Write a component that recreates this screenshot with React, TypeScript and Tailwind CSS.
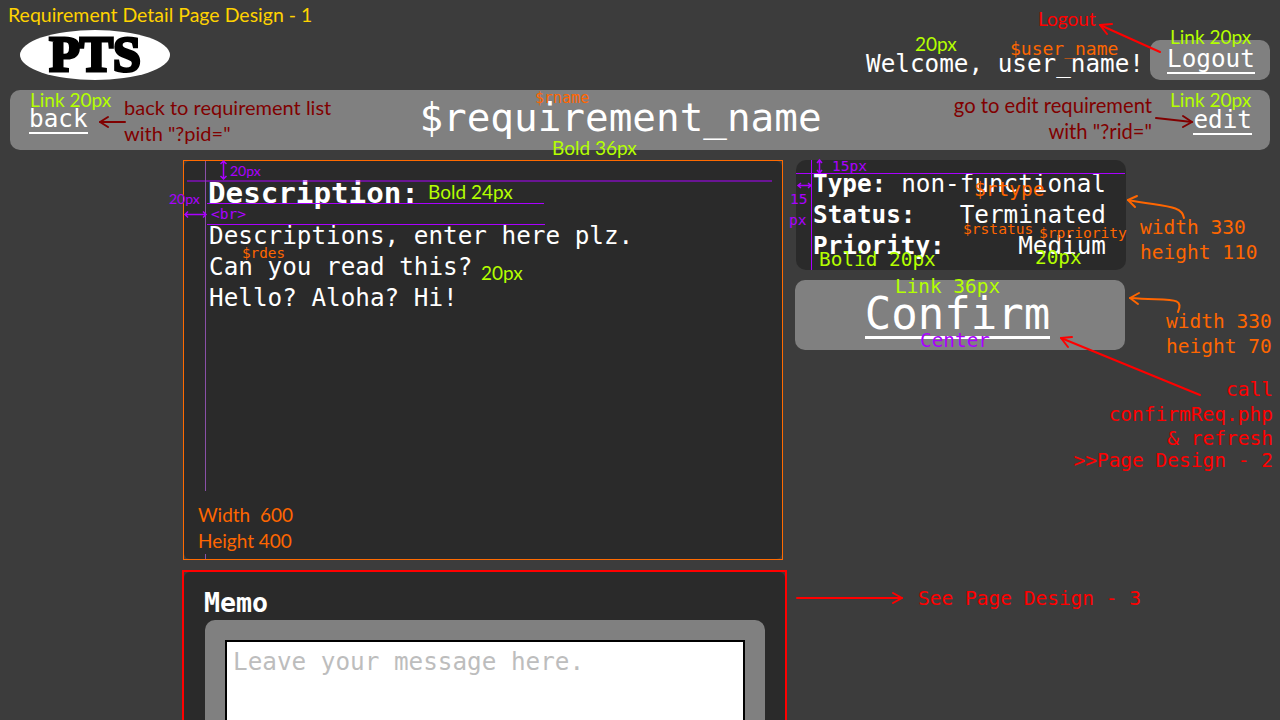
import React from "react";

const mono = "font-['DejaVu_Sans_Mono','Liberation_Mono',monospace]";
const sans = "font-['Lato','Open_Sans',sans-serif]";

function Note({ className, children }: { className: string; children: React.ReactNode }) {
  return <div className={`absolute whitespace-nowrap leading-none ${className}`}>{children}</div>;
}

function Arrow({ d, head, color, width = 2 }: { d: string; head: string; color: string; width?: number }) {
  return (
    <g fill="none" stroke={color} strokeWidth={width} strokeLinecap="round" strokeLinejoin="round">
      <path d={d} />
      <path d={head} />
    </g>
  );
}

function Overlay() {
  const purple = "#aa00ff";
  return (
    <svg className="absolute left-0 top-0 pointer-events-none" width="1280" height="720" viewBox="0 0 1280 720">
      <g stroke={purple} strokeWidth="1" fill="none">
        <path d="M187 181H772" />
        <path d="M207 203.5H544" />
        <path d="M207 224.5H545" />
        <path d="M205.5 161V491M205.5 554V559" stroke="#8a50a8" />
        <path d="M796 173.5H1125" />
        <path d="M811.5 160V270" />
      </g>
      <g stroke={purple} strokeWidth="1.5" fill="none">
        <path d="M223.5 161V179M220.5 164L223.5 161L226.5 164M220.5 176L223.5 179L226.5 176" />
        <path d="M185 214.5H206M188 211.5L185 214.5L188 217.5M203 211.5L206 214.5L203 217.5" />
        <path d="M819.5 160V173M817 163L819.5 160L822 163M817 170L819.5 173L822 170" />
        <path d="M798 185.5H811M801 183L798 185.5L801 188M808 183L811 185.5L808 188" />
      </g>
      <Arrow color="#ff0000" d="M1160 52L1100 25" head="M1112 24L1100 25L1107 34" />
      <Arrow color="#800000" d="M125 122H100" head="M108 117L100 122L108 127" />
      <Arrow color="#800000" d="M1156 118L1192 122" head="M1183 116L1192 122L1183 127" />
      <Arrow color="#ff6600" d="M1184 218C1182 205 1165 207 1128 200" head="M1137 196L1128 200L1135 207" />
      <Arrow color="#ff6600" d="M1178 312C1185 296 1170 301 1130 298" head="M1139 293L1130 298L1138 304" />
      <Arrow color="#ff0000" d="M1200 395L1061 338" head="M1072 337L1061 338L1068 347" />
      <Arrow color="#ff0000" d="M797 598H902" head="M893 593L902 598L893 603" />
    </svg>
  );
}

function Notes() {
  const lime = "text-[#b4ff00]";
  const orange = "text-[#ff6600]";
  const dark = "text-[#800000]";
  const red = "text-[#ff0000]";
  const violet = "text-[#aa00ff]";
  return (
    <>
      <Note className={`${sans} left-[8px] top-[5px] text-[19.5px] text-[#ffd200]`}>Requirement Detail Page Design - 1</Note>
      <Note className={`${sans} left-[1038px] top-[9px] text-[19px] ${red}`}>Logout</Note>
      <Note className={`${sans} left-[1170px] top-[27px] text-[19px] ${lime}`}>Link 20px</Note>
      <Note className={`${sans} left-[915px] top-[34px] text-[19px] ${lime}`}>20px</Note>
      <Note className={`${mono} left-[1010px] top-[40px] text-[18px] ${orange}`}>$user_name</Note>
      <Note className={`${sans} left-[30px] top-[90px] text-[19px] ${lime}`}>Link 20px</Note>
      <Note className={`${sans} left-[124px] top-[97px] text-[20px] ${dark}`}>
        <p className="mb-[6px]">back to requirement list</p>
        <p>with "?pid="</p>
      </Note>
      <Note className={`${mono} left-[535px] top-[91px] text-[15px] ${orange}`}>$rname</Note>
      <Note className={`${sans} left-[552px] top-[138px] text-[19px] ${lime}`}>Bold 36px</Note>
      <Note className={`${sans} right-[128px] top-[95px] text-right text-[20.2px] ${dark}`}>
        <p className="mb-[6px]">go to edit requirement</p>
        <p>with "?rid="</p>
      </Note>
      <Note className={`${sans} left-[1170px] top-[90px] text-[19px] ${lime}`}>Link 20px</Note>
      <Note className={`${sans} left-[230px] top-[164px] text-[14px] ${violet}`}>20px</Note>
      <Note className={`${sans} left-[169px] top-[192px] text-[14px] ${violet}`}>20px</Note>
      <Note className={`${mono} left-[211px] top-[207px] text-[14.5px] ${violet}`}>&lt;br&gt;</Note>
      <Note className={`${sans} left-[428px] top-[182px] text-[19px] ${lime}`}>Bold 24px</Note>
      <Note className={`${mono} left-[242px] top-[246px] text-[14.3px] ${orange}`}>$rdes</Note>
      <Note className={`${sans} left-[481px] top-[263px] text-[19px] ${lime}`}>20px</Note>
      <Note className={`${sans} left-[198px] top-[505px] text-[19px] ${orange}`}>
        <p className="mb-[7px]">Width&nbsp; 600</p>
        <p>Height 400</p>
      </Note>
      <Note className={`${mono} left-[832px] top-[159px] text-[14.5px] ${violet}`}>15px</Note>
      <Note className={`${mono} left-[789px] top-[192px] text-[14.5px] ${violet}`}>
        <p className="mb-[6px] pl-[1px]">15</p>
        <p>px</p>
      </Note>
      <Note className={`${mono} left-[974px] top-[180px] text-[19.5px] ${orange}`}>$rtype</Note>
      <Note className={`${mono} left-[963px] top-[222px] text-[14.6px] ${orange}`}>$rstatus</Note>
      <Note className={`${mono} left-[1039px] top-[226px] text-[14.6px] ${orange}`}>$rpriority</Note>
      <Note className={`${mono} left-[819px] top-[250px] text-[19.4px] ${lime}`}>Bolid 20px</Note>
      <Note className={`${mono} left-[1035px] top-[248px] text-[19.4px] ${lime}`}>20px</Note>
      <Note className={`${mono} left-[1140px] top-[218px] text-[19.5px] ${orange}`}>
        <p className="mb-[5px]">width 330</p>
        <p>height 110</p>
      </Note>
      <Note className={`${mono} left-[895px] top-[277px] text-[19.4px] ${lime}`}>Link 36px</Note>
      <Note className={`${mono} left-[920px] top-[331px] text-[19.4px] ${violet}`}>Center</Note>
      <Note className={`${mono} left-[1166px] top-[312px] text-[19.5px] ${orange}`}>
        <p className="mb-[5px]">width 330</p>
        <p>height 70</p>
      </Note>
      <Note className={`${mono} right-[7px] top-[380px] text-right text-[19.5px] ${red}`}>
        <p className="mb-[5px]">call</p>
        <p className="mb-[5px]">confirmReq.php</p>
        <p className="mb-[2px]">&amp; refresh</p>
        <p>&gt;&gt;Page Design - 2</p>
      </Note>
      <Note className={`${mono} left-[918px] top-[589px] text-[19.5px] ${red}`}>See Page Design - 3</Note>
    </>
  );
}

function LinkText({ className, children }: { className: string; children: React.ReactNode }) {
  return <span className={`text-white border-b-2 border-white ${className}`}>{children}</span>;
}

export default function App() {
  return (
    <div className={`relative w-[1280px] h-[720px] overflow-hidden bg-[#3c3c3c] text-white ${mono}`}>
      <header className="flex items-start justify-between pt-[30px] pl-[20px] pr-[10px] h-[90px]">
        <div className="flex h-[50px] w-[150px] items-center justify-center rounded-[50%] bg-white">
          <span className="font-['Liberation_Serif',serif] text-[50px] font-bold leading-none text-black -mt-[2px] [-webkit-text-stroke:3px_black]">PTS</span>
        </div>
        <div className="mt-[10px] flex items-start gap-[6px]">
          <span className="text-[24.3px] leading-[28px] pt-[10px]">Welcome, user_name!</span>
          <div className="flex h-[40px] w-[120px] items-center justify-center rounded-[10px] bg-[#808080] pl-[2px]">
            <LinkText className="text-[24.3px] leading-[26px]">Logout</LinkText>
          </div>
        </div>
      </header>

      <nav className="mx-[10px] flex h-[60px] items-center justify-between rounded-[10px] bg-[#808080] pl-[19px] pr-[18px]">
        <LinkText className="text-[24.3px] leading-[26px]">back</LinkText>
        <span className="mr-[40px] -mt-[4px] text-[39.3px] leading-none">$requirement_name</span>
        <LinkText className="text-[24.3px] leading-[26px] mt-[2px]">edit</LinkText>
      </nav>

      <main className="mt-[10px] flex items-start gap-[12px] pl-[183px]">
        <div className="flex w-[600px] flex-col gap-[10px]">
          <section className="h-[400px] w-[600px] border border-[#ff6a00] bg-[#3c3c3c]">
            <div className="h-full rounded-[6px] bg-[#2a2a2a] pl-[25px] pt-[17px] text-[24.3px] leading-[31px]">
              <h2 className="-ml-[1px] text-[29.2px] font-bold leading-[31px]">Description:</h2>
              <div className="mt-[11px]">
                <p>Descriptions, enter here plz.</p>
                <p>Can you read this?</p>
                <p>Hello? Aloha? Hi!</p>
              </div>
            </div>
          </section>
          <section className="-ml-[1px] h-[170px] w-[605px] border-2 border-[#ff0000] bg-[#3c3c3c]">
            <div className="h-full rounded-[6px] bg-[#2a2a2a] pl-[21px] pr-[20px] pt-[16px]">
              <h2 className="-ml-[1px] text-[26.6px] font-bold leading-[30px]">Memo</h2>
              <div className="mt-[2px] h-[200px] rounded-[10px] bg-[#808080] px-[20px] pt-[20px]">
                <div className="h-[200px] border-2 border-black bg-white px-[6px] pt-[3px] text-[24.3px] leading-[34px] text-[#bdbdbd]">
                  Leave your message here.
                </div>
              </div>
            </div>
          </section>
        </div>

        <aside className="flex w-[331px] flex-col gap-[10px]">
          <div className="ml-[1px] flex h-[110px] flex-col rounded-[10px] bg-[#2a2a2a] pl-[17px] pr-[20px] pt-[8px] text-[24.3px] leading-[31px]">
            <div className="flex justify-between"><b>Type:</b><span>non-functional</span></div>
            <div className="flex justify-between"><b>Status:</b><span>Terminated</span></div>
            <div className="flex justify-between"><b>Priority:</b><span>Medium</span></div>
          </div>
          <div className="mr-[1px] flex h-[70px] items-start justify-center rounded-[10px] bg-[#808080] pr-[5px] pt-[11px]">
            <span className="border-b-[3px] border-white text-[44px] leading-[45px]">Confirm</span>
          </div>
        </aside>
      </main>

      <Overlay />
      <Notes />
    </div>
  );
}
